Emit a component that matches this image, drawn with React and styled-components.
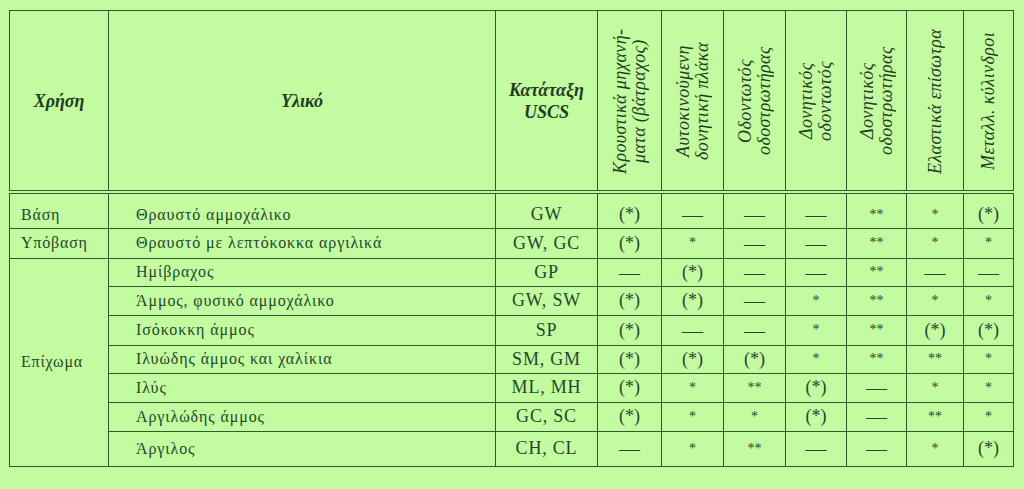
import React from "react";
import styled, { createGlobalStyle } from "styled-components";

const GlobalStyle = createGlobalStyle`
  html, body {
    margin: 0;
    padding: 0;
    background: #c3fba0;
  }
  body {
    font-family: "Liberation Serif", "DejaVu Serif", serif;
    color: #24442a;
  }
`;

const LINE = "#2f5a2c";

const Page = styled.div`
  padding: 10px 0 0 9px;
  width: 1024px;
  height: 489px;
  box-sizing: border-box;
  overflow: hidden;
`;

const Table = styled.table`
  border-collapse: collapse;
  table-layout: fixed;
  width: 1004px;
  border: 1px solid ${LINE};
`;

const HeadCell = styled.th`
  border: 1px solid ${LINE};
  border-bottom: 4px double ${LINE};
  height: 179px;
  padding: 0;
  vertical-align: middle;
  text-align: center;
  font-weight: bold;
  font-style: italic;
  font-size: 18px;
  line-height: 22px;
  color: #1f3d22;
`;

const VerticalLabel = styled.div`
  writing-mode: vertical-rl;
  transform: rotate(180deg);
  margin: 0 auto;
  height: 174px;
  text-align: center;
  font-weight: normal;
  font-style: italic;
  font-size: 18px;
  letter-spacing: 0.4px;
  line-height: 19px;
  white-space: nowrap;
  color: #1f3d22;
`;

const Row = styled.tr`
  height: ${(p) => p.$h}px;
`;

const Cell = styled.td`
  border: 1px solid ${LINE};
  padding: ${(p) => (p.$top ? "8px" : "0")} 0 0 ${(p) => p.$indent || 0}px;
  text-align: ${(p) => p.$align || "center"};
  vertical-align: middle;
  font-size: ${(p) => p.$size || 16}px;
  letter-spacing: ${(p) => p.$spacing || 0}px;
  white-space: nowrap;
  color: #26472b;
`;

const Mark = styled.span`
  font-size: ${(p) => p.$size}px;
  position: relative;
  top: ${(p) => p.$shift}px;
`;

const cols = [99, 387, 102, 64, 62, 62, 61, 60, 57, 50];

const verticalHeads = [
  ["Κρουστικά μηχανή-", "ματα (βάτραχος)"],
  ["Αυτοκινούμενη", "δονητική πλάκα"],
  ["Οδοντωτός", "οδοστρωτήρας"],
  ["Δονητικός", "οδοντωτός"],
  ["Δονητικός", "οδοστρωτήρας"],
  ["Ελαστικά επίσωτρα"],
  ["Μεταλλ. κύλινδροι"],
];

const rows = [
  { use: "Βάση", mat: "Θραυστό αμμοχάλικο", uscs: "GW", v: ["(*)", "—", "—", "—", "**", "*", "(*)"], h: 36, top: true },
  { use: "Υπόβαση", mat: "Θραυστό με λεπτόκοκκα αργιλικά", uscs: "GW, GC", v: ["(*)", "*", "—", "—", "**", "*", "*"], h: 30 },
  { use: "Επίχωμα", span: 7, mat: "Ημίβραχος", uscs: "GP", v: ["—", "(*)", "—", "—", "**", "—", "—"], h: 28 },
  { mat: "Άμμος, φυσικό αμμοχάλικο", uscs: "GW, SW", v: ["(*)", "(*)", "—", "*", "**", "*", "*"], h: 29 },
  { mat: "Ισόκοκκη άμμος", uscs: "SP", v: ["(*)", "—", "—", "*", "**", "(*)", "(*)"], h: 30 },
  { mat: "Ιλυώδης άμμος και χαλίκια", uscs: "SM, GM", v: ["(*)", "(*)", "(*)", "*", "**", "**", "*"], h: 28 },
  { mat: "Ιλύς", uscs: "ML, MH", v: ["(*)", "*", "**", "(*)", "—", "*", "*"], h: 29 },
  { mat: "Αργιλώδης άμμος", uscs: "GC, SC", v: ["(*)", "*", "*", "(*)", "—", "**", "*"], h: 29 },
  { mat: "Άργιλος", uscs: "CH, CL", v: ["—", "*", "**", "—", "—", "*", "(*)"], h: 35 },
];

function Value({ text }) {
  if (text === "*" || text === "**") return <Mark $size={14} $shift={-1}>{text}</Mark>;
  if (text === "—") return <Mark $size={21} $shift={1}>{text}</Mark>;
  return <Mark $size={18} $shift={0}>{text}</Mark>;
}

export default function App() {
  return (
    <>
      <GlobalStyle />
      <Page>
        <Table>
          <colgroup>
            {cols.map((w, i) => (
              <col key={i} style={{ width: w }} />
            ))}
          </colgroup>
          <thead>
            <tr>
              <HeadCell>Χρήση</HeadCell>
              <HeadCell>Υλικό</HeadCell>
              <HeadCell>
                Κατάταξη
                <br />
                USCS
              </HeadCell>
              {verticalHeads.map((lines, i) => (
                <HeadCell key={i}>
                  <VerticalLabel>
                    {lines.map((l, j) => (
                      <React.Fragment key={j}>
                        {j > 0 && <br />}
                        {l}
                      </React.Fragment>
                    ))}
                  </VerticalLabel>
                </HeadCell>
              ))}
            </tr>
          </thead>
          <tbody>
            {rows.map((r, i) => (
              <Row key={i} $h={r.h}>
                {r.use && (
                  <Cell $align="left" $indent={11} $spacing={0.8} $top={r.top} rowSpan={r.span || 1}>
                    {r.use}
                  </Cell>
                )}
                <Cell $align="left" $indent={27} $spacing={0.9} $top={r.top}>
                  {r.mat}
                </Cell>
                <Cell $size={18} $spacing={0.8} $top={r.top}>
                  {r.uscs}
                </Cell>
                {r.v.map((t, j) => (
                  <Cell key={j} $top={r.top}>
                    <Value text={t} />
                  </Cell>
                ))}
              </Row>
            ))}
          </tbody>
        </Table>
      </Page>
    </>
  );
}
